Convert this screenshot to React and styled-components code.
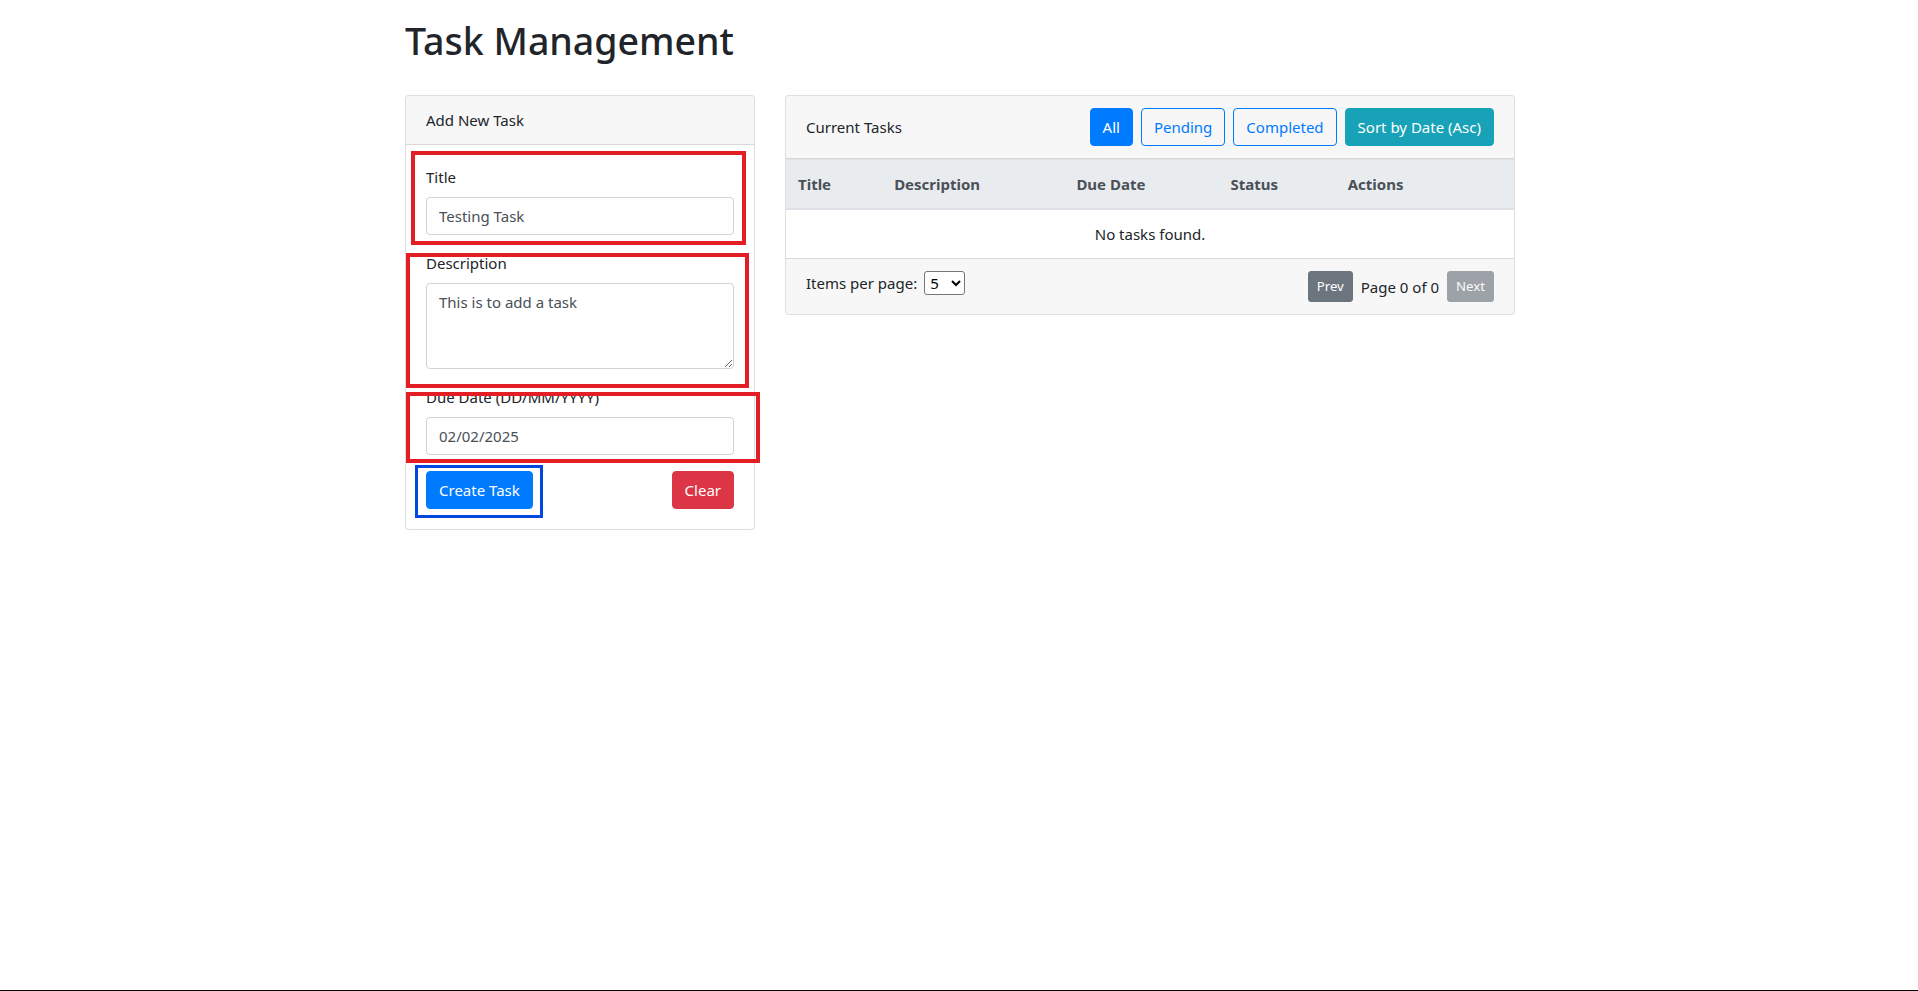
import React, { useState } from "react";
import styled, { createGlobalStyle, css } from "styled-components";

const GlobalStyle = createGlobalStyle`
  *, *::before, *::after {
    box-sizing: border-box;
  }
  body {
    margin: 0;
    font-family: "Noto Sans", "Open Sans", Arial, sans-serif;
    font-size: 15px;
    line-height: 24px;
    color: #212529;
    background: #fff;
  }
`;

const Page = styled.div`
  min-height: 100vh;
  border-bottom: 1px solid #000;
`;

const Container = styled.div`
  max-width: 1140px;
  margin: 0 auto;
  padding: 17px 15px 0 16px;
`;

const Heading = styled.h1`
  margin: 0 0 8px;
  font-size: 37.5px;
  font-weight: 500;
  line-height: 48px;
`;

const Row = styled.div`
  display: grid;
  grid-template-columns: 350px 730px;
  gap: 30px;
  margin-top: 30px;
  align-items: start;
`;

const Card = styled.div`
  border: 1px solid rgba(0, 0, 0, 0.125);
  border-radius: 4px;
  background: #fff;
`;

const CardHeader = styled.div`
  display: flex;
  align-items: center;
  justify-content: space-between;
  padding: 12px 20px;
  background: rgba(0, 0, 0, 0.03);
  border-bottom: 1px solid rgba(0, 0, 0, 0.125);
  border-radius: 3px 3px 0 0;
`;

const CardBody = styled.form`
  padding: 20px;
`;

const CardFooter = styled.div`
  display: flex;
  justify-content: space-between;
  padding: 12px 20px;
  background: rgba(0, 0, 0, 0.03);
  border-top: 1px solid rgba(0, 0, 0, 0.125);
  border-radius: 0 0 3px 3px;
`;

const FormGroup = styled.div`
  position: relative;
  margin-bottom: 16px;
`;

const Label = styled.label`
  display: block;
  margin-bottom: 8px;
`;

const fieldCss = css`
  display: block;
  width: 100%;
  padding: 6px 12px;
  font-family: inherit;
  font-size: 15px;
  line-height: 24px;
  color: #495057;
  background: #fff;
  border: 1px solid #ced4da;
  border-radius: 4px;
  outline: none;
`;

const Input = styled.input`
  ${fieldCss}
  height: 38px;
`;

const TextArea = styled.textarea`
  ${fieldCss}
  height: 86px;
`;

const Actions = styled.div`
  display: flex;
  justify-content: space-between;
  align-items: center;
`;

const variants = {
  primary: css`
    color: #fff;
    background: #007bff;
    border-color: #007bff;
  `,
  danger: css`
    color: #fff;
    background: #dc3545;
    border-color: #dc3545;
  `,
  info: css`
    color: #fff;
    background: #17a2b8;
    border-color: #17a2b8;
  `,
  outline: css`
    color: #007bff;
    background: transparent;
    border-color: #007bff;
  `,
  secondary: css`
    color: #fff;
    background: #6c757d;
    border-color: #6c757d;
  `,
  disabled: css`
    color: #fff;
    background: #6c757d;
    border-color: #6c757d;
    opacity: 0.65;
  `,
};

const Button = styled.button`
  position: relative;
  display: inline-block;
  font-family: inherit;
  font-weight: 400;
  font-size: ${(p) => (p.$small ? "13.2px" : "15px")};
  line-height: ${(p) => (p.$small ? "21px" : "24px")};
  padding: ${(p) => (p.$small ? "4px 8px" : "6px 12px")};
  border: 1px solid transparent;
  border-radius: ${(p) => (p.$small ? "3px" : "4px")};
  cursor: pointer;
  ${(p) => variants[p.$variant]}
`;

const Annot = styled.span`
  position: absolute;
  pointer-events: none;
  top: ${(p) => p.$t}px;
  right: ${(p) => p.$r}px;
  bottom: ${(p) => p.$b}px;
  left: ${(p) => p.$l}px;
  border: ${(p) => (p.$blue ? "3px solid #0048e0" : "4px solid #e31e25")};
`;

const ButtonGroup = styled.div`
  display: flex;
  gap: 8px;
`;

const Table = styled.table`
  width: 100%;
  border-collapse: collapse;
  table-layout: fixed;
  color: #212529;
`;

const Th = styled.th`
  width: ${(p) => p.$w}px;
  padding: 12px;
  text-align: left;
  font-weight: 700;
  color: #495057;
  background: #e9ecef;
  border-top: 1px solid #dee2e6;
  border-bottom: 2px solid #dee2e6;
  vertical-align: bottom;
`;

const EmptyCell = styled.td`
  padding: 12px;
  text-align: center;
  border-top: 1px solid #dee2e6;
`;

const PerPage = styled.div`
  display: flex;
  align-items: center;
  height: 24px;
`;

const Select = styled.select`
  margin-left: 7px;
  width: 41px;
  height: 24px;
  font-family: inherit;
  font-size: 15px;
  color: #000;
  border: 1px solid #767676;
  border-radius: 3px;
  background: #fff;
  padding: 0 0 0 1px;
`;

const Pager = styled.div`
  display: flex;
  align-items: center;
`;

const PageInfo = styled.span`
  margin: 0 8px;
`;

const columns = [
  ["Title", 96],
  ["Description", 182],
  ["Due Date", 154],
  ["Status", 117],
  ["Actions", 178],
];

export default function App() {
  const [title, setTitle] = useState("Testing Task");
  const [desc, setDesc] = useState("This is to add a task");
  const [due, setDue] = useState("02/02/2025");
  const [perPage, setPerPage] = useState("5");

  return (
    <Page>
      <GlobalStyle />
      <Container>
        <Heading>Task Management</Heading>
        <Row>
          <Card>
            <CardHeader>Add New Task</CardHeader>
            <CardBody onSubmit={(e) => e.preventDefault()}>
              <FormGroup>
                <Label>Title</Label>
                <Input value={title} onChange={(e) => setTitle(e.target.value)} />
                <Annot $t={-14} $r={-12} $b={-10} $l={-15} />
              </FormGroup>
              <FormGroup>
                <Label>Description</Label>
                <TextArea rows={3} value={desc} onChange={(e) => setDesc(e.target.value)} />
                <Annot $t={2} $r={-15} $b={-19} $l={-20} />
              </FormGroup>
              <FormGroup>
                <Label>Due Date (DD/MM/YYYY)</Label>
                <Input value={due} onChange={(e) => setDue(e.target.value)} />
                <Annot $t={7} $r={-26} $b={-8} $l={-20} />
              </FormGroup>
              <Actions>
                <Button type="submit" $variant="primary">
                  Create Task
                  <Annot $blue $t={-7} $r={-11} $b={-10} $l={-12} />
                </Button>
                <Button type="button" $variant="danger">
                  Clear
                </Button>
              </Actions>
            </CardBody>
          </Card>

          <Card>
            <CardHeader>
              <span>Current Tasks</span>
              <ButtonGroup>
                <Button $variant="primary">All</Button>
                <Button $variant="outline">Pending</Button>
                <Button $variant="outline">Completed</Button>
                <Button $variant="info">Sort by Date (Asc)</Button>
              </ButtonGroup>
            </CardHeader>
            <Table>
              <thead>
                <tr>
                  {columns.map(([name, w]) => (
                    <Th key={name} $w={w}>
                      {name}
                    </Th>
                  ))}
                </tr>
              </thead>
              <tbody>
                <tr>
                  <EmptyCell colSpan={5}>No tasks found.</EmptyCell>
                </tr>
              </tbody>
            </Table>
            <CardFooter>
              <PerPage>
                Items per page:
                <Select value={perPage} onChange={(e) => setPerPage(e.target.value)}>
                  <option value="5">5</option>
                  <option value="10">10</option>
                  <option value="20">20</option>
                </Select>
              </PerPage>
              <Pager>
                <Button $small $variant="secondary">
                  Prev
                </Button>
                <PageInfo>Page 0 of 0</PageInfo>
                <Button $small $variant="disabled" disabled>
                  Next
                </Button>
              </Pager>
            </CardFooter>
          </Card>
        </Row>
      </Container>
    </Page>
  );
}
